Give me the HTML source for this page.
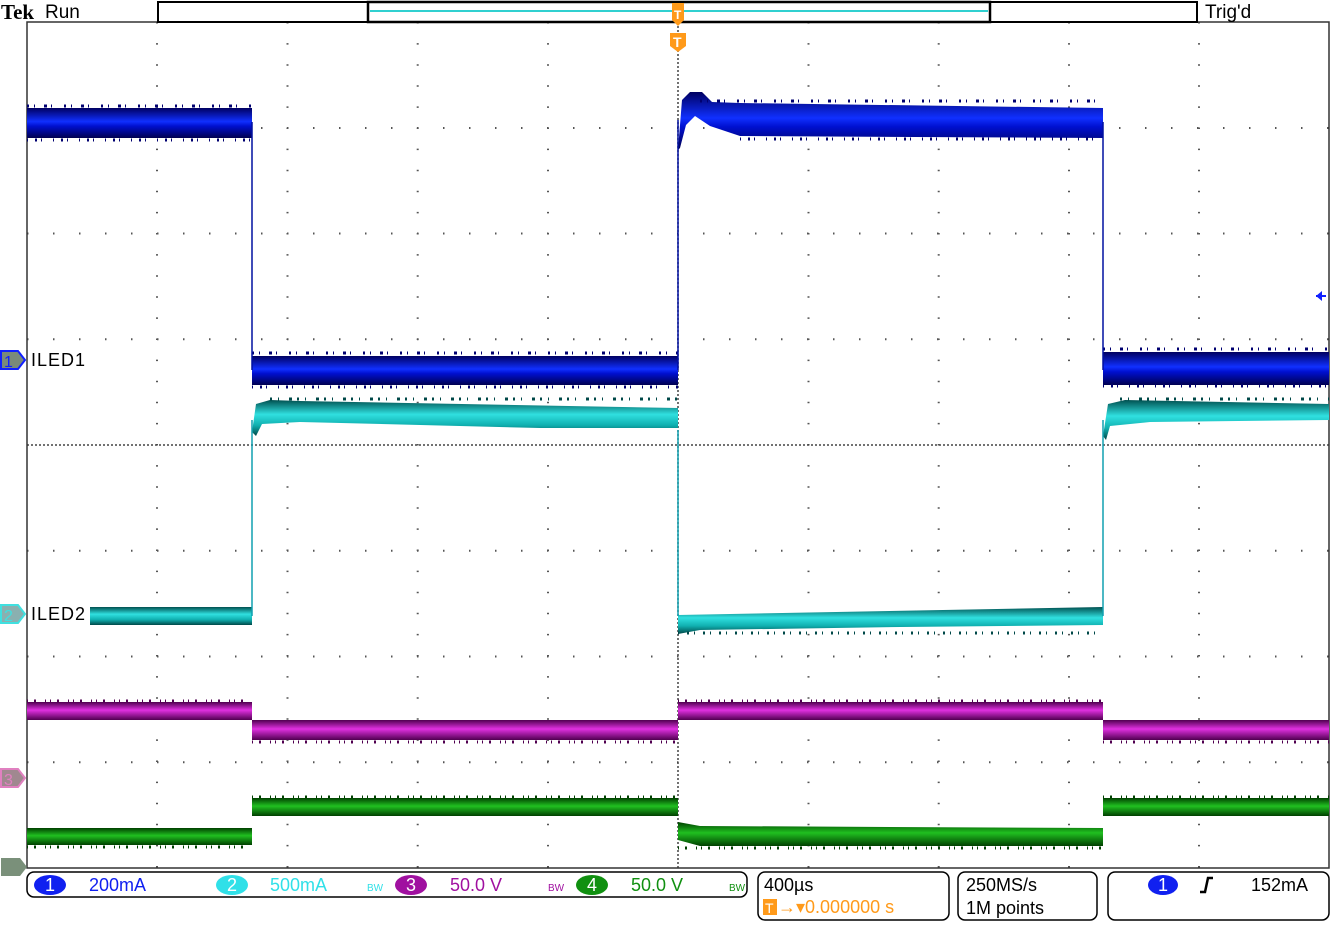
<!DOCTYPE html>
<html><head><meta charset="utf-8"><style>
body{margin:0;width:1333px;height:938px;background:#fff;overflow:hidden;font-family:"Liberation Sans",sans-serif}
svg{position:absolute;left:0;top:0}
</style></head><body>
<svg width="1333" height="938" viewBox="0 0 1333 938" xmlns="http://www.w3.org/2000/svg">
<defs>
<linearGradient id="gb" x1="0" y1="0" x2="0" y2="1"><stop offset="0" stop-color="#000060"/><stop offset="0.45" stop-color="#1030ff"/><stop offset="0.6" stop-color="#0010d0"/><stop offset="1" stop-color="#000050"/></linearGradient>
<linearGradient id="gc" x1="0" y1="0" x2="0" y2="1"><stop offset="0" stop-color="#005050"/><stop offset="0.4" stop-color="#30e0e0"/><stop offset="0.7" stop-color="#10b0b0"/><stop offset="1" stop-color="#004848"/></linearGradient>
<linearGradient id="gm" x1="0" y1="0" x2="0" y2="1"><stop offset="0" stop-color="#500050"/><stop offset="0.45" stop-color="#e030e0"/><stop offset="1" stop-color="#500050"/></linearGradient>
<linearGradient id="gg" x1="0" y1="0" x2="0" y2="1"><stop offset="0" stop-color="#004000"/><stop offset="0.45" stop-color="#20c020"/><stop offset="1" stop-color="#004000"/></linearGradient>
</defs>
<!-- grid -->
<g stroke="#555" stroke-width="2" fill="none">
<path d="M27,128H1329M27,233.5H1329M27,339.3H1329M27,550.8H1329M27,656.5H1329M27,762.3H1329" stroke-dasharray="1.5 24.5"/>
<path d="M157,22V868M287.5,22V868M417.7,22V868M548,22V868M808.5,22V868M938.7,22V868M1069,22V868M1199,22V868" stroke-dasharray="1.5 19.6"/>
</g>
<g stroke="#444" stroke-width="1.5" fill="none">
<path d="M27,445H1329M678,22V868" stroke-dasharray="2 2"/>
</g>
<rect x="27" y="22" width="1302" height="846" fill="none" stroke="#333" stroke-width="1.5"/>
<!-- ch1 blue -->
<g fill="url(#gb)">
<rect x="27" y="108" width="225" height="30"/>
<rect x="252" y="356" width="426" height="29"/>
<path d="M678,150 L682,100 L690,92 L702,92 L712,102 L740,103 L1103,108 L1103,138 L740,136 L710,126 L695,116 L686,125 L680,148Z"/>
<rect x="1103" y="352" width="226" height="33"/>
</g>
<g stroke="#000070" stroke-width="3" fill="none" stroke-dasharray="2 5 1 9 3 4 1 12">
<path d="M27,106H252M252,353H678M700,101H1103M1103,349H1329"/>
<path d="M27,140H252M252,387H678M740,139H1103M1103,386H1329" stroke-dasharray="1 7 2 4 1 11"/>
</g>
<path d="M252,122V370M678,370V120M1103,122V370" stroke="#0010a0" stroke-width="1.5"/>
<!-- ch2 cyan -->
<g fill="url(#gc)">
<rect x="90" y="607" width="162" height="18"/>
<path d="M252,432 L256,404 L270,400 L300,401 L678,408 L678,428 L540,428 L300,422 L262,424 L256,436Z"/>
<path d="M678,615 L1103,607 L1103,625 L900,627 L700,630 L678,634Z"/>
<path d="M1103,436 L1108,404 L1125,400 L1329,404 L1329,420 L1150,422 L1110,426 L1106,440Z"/>
</g>
<g stroke="#004848" stroke-width="3" fill="none" stroke-dasharray="2 6 1 10 3 5">
<path d="M270,399H678M1120,399H1329"/>
<path d="M678,633H1103" stroke-dasharray="1 8 2 5"/>
</g>
<path d="M252,616V420M678,430V616M1103,616V420" stroke="#10a0b0" stroke-width="1.5"/>
<!-- ch3 magenta -->
<g fill="url(#gm)">
<rect x="27" y="702" width="225" height="18"/>
<rect x="252" y="720" width="426" height="20"/>
<rect x="678" y="702" width="425" height="18"/>
<rect x="1103" y="720" width="226" height="20"/>
</g>
<g stroke="#500050" stroke-width="3" fill="none" stroke-dasharray="1 6 2 9 1 4">
<path d="M27,701H252M252,742H678M678,701H1103M1103,742H1329"/>
</g>
<!-- ch4 green -->
<g fill="url(#gg)">
<rect x="27" y="828" width="225" height="17"/>
<rect x="252" y="798" width="426" height="18"/>
<path d="M678,822 L700,826 L1103,828 L1103,846 L700,846 L678,840Z"/>
<rect x="1103" y="798" width="226" height="18"/>
</g>
<g stroke="#004000" stroke-width="3" fill="none" stroke-dasharray="1 6 2 9 1 4">
<path d="M27,847H252M252,797H678M678,848H1103M1103,797H1329"/>
</g>
<!-- markers -->
<path d="M1,351H18L25,360L18,369H1Z" fill="#7a8a7a" stroke="#1020ff" stroke-width="2"/>
<text x="4" y="367" font-size="16" fill="#1020ff">1</text>
<text x="31" y="366" font-size="18" fill="#000" letter-spacing="1">ILED1</text>
<path d="M1,605H18L25,614L18,623H1Z" fill="#8ab0b0" stroke="#40e0e0" stroke-width="2"/>
<text x="4" y="621" font-size="16" fill="#40e0e0">2</text>
<rect x="29" y="604" width="60" height="20" fill="#fff"/>
<text x="31" y="620" font-size="18" fill="#000" letter-spacing="1">ILED2</text>
<path d="M1,769H18L25,778L18,787H1Z" fill="#a08890" stroke="#e080c0" stroke-width="2"/>
<text x="4" y="785" font-size="16" fill="#e080c0">3</text>
<path d="M1,858H20L27,867L20,876H1Z" fill="#7a907a"/>
<path d="M1316,296L1322,291V301Z" fill="#1020ff"/><path d="M1316,296H1326" stroke="#1020ff" stroke-width="2"/>
<!-- top bar -->
<text x="1" y="19" font-family="Liberation Serif,serif" font-weight="bold" font-size="21" fill="#000">Tek</text>
<text x="45" y="18" font-size="19" fill="#000">Run</text>
<rect x="158" y="2" width="1039" height="20" fill="#fff" stroke="#000" stroke-width="2"/>
<rect x="368" y="2" width="622" height="20" fill="#fff" stroke="#000" stroke-width="2.5"/>
<path d="M370,11H988" stroke="#30d0d0" stroke-width="2"/>
<text x="1205" y="18" font-size="19" fill="#000">Trig'd</text>
<path d="M672,3H684V20L678,26L672,20Z" fill="#ff9a1a"/>
<text x="674" y="19" font-size="12" fill="#fff" font-weight="bold">T</text>
<path d="M670,33H686V46L678,52L670,46Z" fill="#ff9a1a"/>
<text x="673" y="47" font-size="14" fill="#fff" font-weight="bold">T</text>
<!-- bottom -->
<rect x="27" y="872" width="720" height="25" rx="7" fill="#fff" stroke="#000" stroke-width="1.5"/>
<g font-size="18">
<ellipse cx="50" cy="885" rx="16" ry="10" fill="#1020f0"/><text x="45" y="891" fill="#fff">1</text>
<text x="89" y="891" fill="#1020f0">200mA</text>
<ellipse cx="232" cy="885" rx="16" ry="10" fill="#30e0e8"/><text x="227" y="891" fill="#fff">2</text>
<text x="270" y="891" fill="#30e0e8">500mA</text>
<text x="367" y="891" font-size="10" fill="#30e0e8">BW</text>
<ellipse cx="411" cy="885" rx="16" ry="10" fill="#a010a0"/><text x="406" y="891" fill="#fff">3</text>
<text x="450" y="891" fill="#a010a0">50.0 V</text>
<text x="548" y="891" font-size="10" fill="#a010a0">BW</text>
<ellipse cx="592" cy="885" rx="16" ry="10" fill="#109010"/><text x="587" y="891" fill="#fff">4</text>
<text x="631" y="891" fill="#109010">50.0 V</text>
<text x="729" y="891" font-size="10" fill="#109010">BW</text>
<rect x="758" y="872" width="191" height="48" rx="7" fill="#fff" stroke="#000" stroke-width="1.5"/>
<text x="764" y="891" fill="#000">400µs</text>
<rect x="763" y="899" width="14" height="16" fill="#ff9a1a"/><text x="765" y="913" font-size="14" fill="#fff">T</text>
<text x="778" y="913" fill="#ff9a1a">→▾0.000000 s</text>
<rect x="958" y="872" width="139" height="48" rx="7" fill="#fff" stroke="#000" stroke-width="1.5"/>
<text x="966" y="891" fill="#000">250MS/s</text>
<text x="966" y="914" fill="#000">1M points</text>
<rect x="1108" y="872" width="221" height="48" rx="7" fill="#fff" stroke="#000" stroke-width="1.5"/>
<ellipse cx="1163" cy="885" rx="15" ry="10" fill="#1020f0"/><text x="1158" y="891" fill="#fff">1</text>
<path d="M1200,892L1205,892L1208,878L1213,878" stroke="#000" stroke-width="2.5" fill="none"/>
<text x="1251" y="891" fill="#000">152mA</text>
</g>
</svg>
</body></html>
